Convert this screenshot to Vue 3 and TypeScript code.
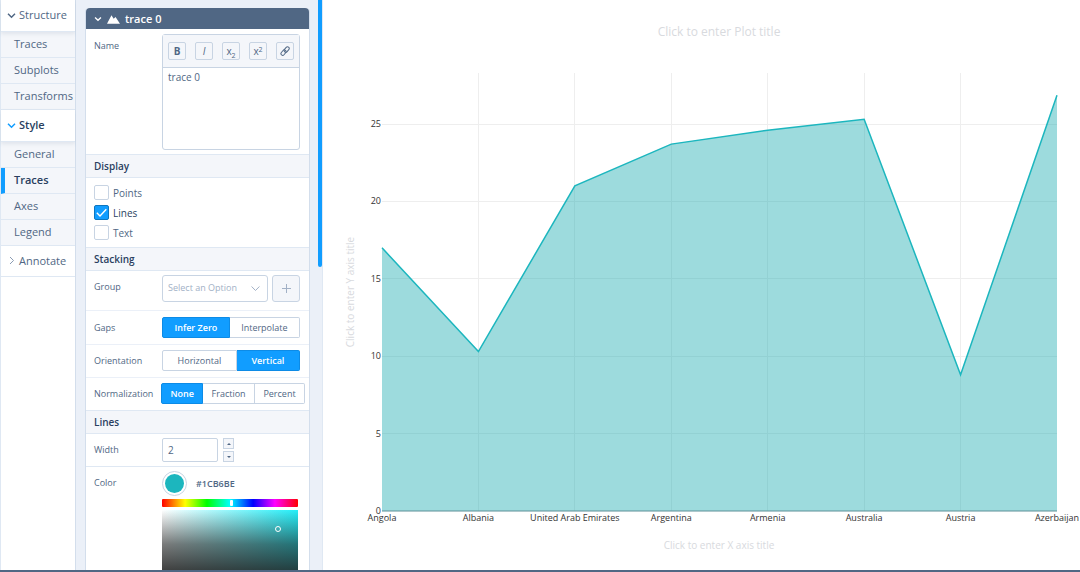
<script setup lang="ts">
import { ref } from 'vue'

interface NavGroup {
  title: string
  open: boolean
  items: string[]
}

const nav: NavGroup[] = [
  { title: 'Structure', open: true, items: ['Traces', 'Subplots', 'Transforms'] },
  { title: 'Style', open: true, items: ['General', 'Traces', 'Axes', 'Legend'] },
  { title: 'Annotate', open: false, items: [] },
]
const current = ref('Style/Traces')

const name = ref('trace 0')
const modes = ref<string[]>(['Lines'])
const group = ref('')
const lineWidth = ref('2')

const switches = ref([
  { label: 'Gaps', options: ['Infer Zero', 'Interpolate'], value: 'Infer Zero' },
  { label: 'Orientation', options: ['Horizontal', 'Vertical'], value: 'Vertical' },
  { label: 'Normalization', options: ['None', 'Fraction', 'Percent'], value: 'None' },
])

const data = [
  { country: 'Angola', value: 17 },
  { country: 'Albania', value: 10.3 },
  { country: 'United Arab Emirates', value: 21 },
  { country: 'Argentina', value: 23.7 },
  { country: 'Armenia', value: 24.6 },
  { country: 'Australia', value: 25.3 },
  { country: 'Austria', value: 8.8 },
  { country: 'Azerbaijan', value: 26.85 },
]
const plot = { left: 59, right: 734, top: 73, bottom: 511 }
const px = (i: number) => plot.left + (i * (plot.right - plot.left)) / (data.length - 1)
const py = (v: number) => plot.bottom - v * 15.48
const line = data.map((d, i) => `${px(i)},${py(d.value)}`).join(' ')
const area = `${plot.left},${plot.bottom} ${line} ${plot.right},${plot.bottom}`
const ticks = [0, 5, 10, 15, 20, 25]
</script>

<template>
  <div class="editor">
    <nav class="sidebar" aria-label="Editor sections">
      <section v-for="g in nav" :key="g.title" class="group">
        <button type="button" class="group-title" :class="{ active: g.title === 'Style' }" :aria-expanded="g.open">
          <svg v-if="g.open" width="9" height="9" viewBox="0 0 9 9"><path d="M1 2.7 4.5 6.2 8 2.7" /></svg>
          <svg v-else class="closed" width="9" height="9" viewBox="0 0 9 9"><path d="M3 1 6.5 4.5 3 8" /></svg>
          {{ g.title }}
        </button>
        <button
          v-for="item in g.items"
          :key="item"
          type="button"
          class="item"
          :class="{ selected: current === g.title + '/' + item }"
          @click="current = g.title + '/' + item"
        >{{ item }}</button>
      </section>
    </nav>

    <main class="panel">
      <div class="card">
        <button type="button" class="card-head" aria-expanded="true">
          <svg width="8" height="8" viewBox="0 0 9 9"><path class="chev" d="M1.2 2.8 4.5 6 7.8 2.8" /></svg>
          <svg width="13" height="10" viewBox="0 0 14 10"><path class="hill" d="M0 10 4.8 1 7.2 4.8 9.2 2.8 14 10Z" /></svg>
          <span>trace 0</span>
        </button>

        <div class="row name-row">
          <label for="name">Name</label>
          <div class="rich">
            <div class="tools">
              <button type="button" aria-label="Bold"><b>B</b></button>
              <button type="button" aria-label="Italic"><i>I</i></button>
              <button type="button" aria-label="Subscript"><span>x<small class="sub">2</small></span></button>
              <button type="button" aria-label="Superscript"><span>x<small class="sup">2</small></span></button>
              <button type="button" aria-label="Link">
                <svg width="10" height="10" viewBox="0 0 10 10">
                  <g transform="rotate(-50 5 5)">
                    <rect x="-0.2" y="3.2" width="6" height="3.4" rx="1.7" />
                    <rect x="4.2" y="3.6" width="6" height="3.4" rx="1.7" />
                  </g>
                </svg>
              </button>
            </div>
            <textarea id="name" v-model="name" spellcheck="false"></textarea>
          </div>
        </div>

        <h3>Display</h3>
        <div class="checks">
          <label v-for="m in ['Points', 'Lines', 'Text']" :key="m" :class="{ on: modes.includes(m) }">
            <span class="box">
              <input v-model="modes" type="checkbox" :value="m" />
              <svg v-if="modes.includes(m)" width="15" height="15" viewBox="0 0 15 15"><path d="M2.8 7.8 6 11 12.3 4.2" /></svg>
            </span>
            {{ m }}
          </label>
        </div>

        <h3>Stacking</h3>
        <div class="row group-row">
          <label for="group">Group</label>
          <div class="picker">
            <div class="select">
              <select id="group" v-model="group"><option value="">Select an Option</option></select>
              <svg width="9" height="9" viewBox="0 0 9 9"><path d="M0.6 2.5 4.5 6.5 8.4 2.5" /></svg>
            </div>
            <button type="button" class="add" aria-label="Add group">
              <svg width="9" height="9" viewBox="0 0 9 9"><path d="M4.5 0V9M0 4.5H9" /></svg>
            </button>
          </div>
        </div>

        <div v-for="s in switches" :key="s.label" class="row switch-row">
          <span :id="s.label">{{ s.label }}</span>
          <div class="segments" :class="{ three: s.options.length === 3 }" role="radiogroup" :aria-labelledby="s.label">
            <label v-for="o in s.options" :key="o" :class="{ on: s.value === o }">
              <input v-model="s.value" type="radio" :name="s.label" :value="o" />{{ o }}
            </label>
          </div>
        </div>

        <h3>Lines</h3>
        <div class="row width-row">
          <label for="width">Width</label>
          <div class="stepper">
            <input id="width" v-model="lineWidth" type="text" inputmode="numeric" />
            <div class="arrows">
              <button type="button" aria-label="Increase"><svg width="4" height="2" viewBox="0 0 4 2"><path d="M0 2 2 0 4 2Z" /></svg></button>
              <button type="button" aria-label="Decrease"><svg width="4" height="2" viewBox="0 0 4 2"><path d="M0 0 2 2 4 0Z" /></svg></button>
            </div>
          </div>
        </div>
        <div class="row color-row">
          <label for="hue">Color</label>
          <div class="color">
            <div class="swatch-line">
              <button type="button" class="swatch" aria-label="Line color"></button>
              <span>#1CB6BE</span>
            </div>
            <input id="hue" class="hue" type="range" min="0" max="360" value="183" />
            <div class="shade"><span class="dot"></span></div>
          </div>
        </div>
      </div>
      <div class="thumb"></div>
    </main>

    <section class="chart">
      <svg viewBox="0 0 757 570" role="img" aria-label="Area chart by country">
        <g class="grid">
          <line v-for="t in ticks.slice(1)" :key="t" :x1="plot.left" :x2="plot.right" :y1="py(t)" :y2="py(t)" />
          <line v-for="(d, i) in data.slice(1, -1)" :key="d.country" :x1="px(i + 1)" :x2="px(i + 1)" :y1="plot.top" :y2="plot.bottom" />
        </g>
        <polygon class="area" :points="area" />
        <line class="axis" :x1="plot.left" :x2="plot.right" :y1="plot.bottom" :y2="plot.bottom" />
        <polyline class="trace" :points="line" />
        <g class="tick">
          <text v-for="t in ticks" :key="t" x="58" :y="py(t) + 3" text-anchor="end">{{ t }}</text>
          <text v-for="(d, i) in data" :key="d.country" :x="px(i)" y="521" text-anchor="middle">{{ d.country }}</text>
        </g>
        <g class="hint">
          <text class="title" x="396" y="36" text-anchor="middle">Click to enter Plot title</text>
          <text x="396" y="549" text-anchor="middle">Click to enter X axis title</text>
          <text transform="translate(31 292) rotate(-90)" text-anchor="middle">Click to enter Y axis title</text>
        </g>
      </svg>
    </section>
  </div>
</template>

<style>
body {
  background: #fff;
}
</style>

<style scoped>
* {
  box-sizing: border-box;
}
.editor {
  display: grid;
  grid-template-columns: 76px 247px minmax(0, 1fr);
  height: 100vh;
  overflow: hidden;
  border-bottom: 2px solid #506784;
  font: 10px/14px 'Open Sans', sans-serif;
  color: #506784;
}
button,
input,
select,
textarea {
  margin: 0;
  padding: 0;
  font: inherit;
  color: inherit;
  background: none;
  border: 0;
  border-radius: 0;
  outline: none;
  appearance: none;
}
svg {
  display: block;
  flex: none;
  fill: none;
  stroke: currentColor;
}
.sidebar {
  border-left: 1px solid #dfe8f3;
  border-right: 1px solid #d3deec;
  font-size: 11px;
}
.group-title,
.item {
  display: flex;
  align-items: center;
  width: 100%;
  border-bottom: 1px solid #dfe8f3;
  white-space: nowrap;
}
.group-title {
  height: 32px;
  padding: 0 0 1px 6px;
  gap: 3px;
  position: relative;
  box-shadow: 0 2px 4px rgba(80, 103, 132, 0.12);
}
.group:last-child .group-title {
  height: 31px;
  box-shadow: none;
}
.group-title svg {
  stroke-width: 1.5;
}
.group-title .closed {
  stroke: #8a9bb3;
  stroke-width: 1;
}
.group-title.active {
  font-weight: 600;
  color: #2a3f5f;
}
.group-title.active svg {
  stroke: #119dff;
}
.item {
  height: 26px;
  padding: 0 0 1px 13px;
  background: #f4f6fa;
}
.item.selected {
  border-left: 4px solid #119dff;
  padding-left: 9px;
  font-weight: 600;
  color: #2a3f5f;
}
.panel {
  position: relative;
  padding: 8px 12px 0 9px;
  background: #ebf0f8;
  border-right: 1px solid #dfe8f3;
  overflow: hidden;
}
.thumb {
  position: absolute;
  top: 0;
  right: 0;
  width: 4px;
  height: 267px;
  background: #119dff;
  border-radius: 0 0 2px 2px;
}
.card {
  min-height: 100%;
  background: #fff;
  border: 1px solid #d3deec;
  border-top: 0;
  border-radius: 4px 4px 0 0;
}
.card-head {
  display: flex;
  align-items: center;
  gap: 5px;
  width: 100%;
  height: 21px;
  padding-left: 8px;
  background: #506784;
  border-radius: 4px 4px 0 0;
  color: #fff;
  font-size: 11px;
  font-weight: 600;
}
.chev {
  stroke-width: 1.5;
}
.hill {
  fill: #fff;
  stroke: none;
}
h3 {
  margin: 0;
  height: 24px;
  padding-left: 8px;
  font-size: 10px;
  line-height: 22px;
  font-weight: 600;
  color: #2a3f5f;
  background: #f4f6fa;
  border-top: 1px solid #dfe8f3;
  border-bottom: 1px solid #dfe8f3;
}
.row {
  display: grid;
  grid-template-columns: 68px minmax(0, 1fr);
  padding: 0 9px 0 8px;
  font-size: 9px;
}
.row > label {
  padding-top: 5px;
}
.name-row {
  height: 125px;
  padding-top: 5px;
}
.rich {
  height: 116px;
  display: flex;
  flex-direction: column;
  border: 1px solid #c8d4e3;
  border-radius: 3px;
  font-size: 10px;
}
.tools {
  display: flex;
  justify-content: space-between;
  align-items: center;
  height: 33px;
  padding: 0 5px;
  background: #f4f6fa;
  border-bottom: 1px solid #c8d4e3;
}
.tools button {
  display: flex;
  align-items: center;
  justify-content: center;
  width: 18px;
  height: 18px;
  border: 1px solid #c8d4e3;
  border-radius: 2px;
  line-height: 16px;
}
.tools small {
  position: relative;
  font-size: 7px;
  line-height: 7px;
}
.tools .sub {
  top: 3px;
}
.tools .sup {
  top: -3px;
}
textarea {
  flex: 1;
  width: 100%;
  padding: 2px 5px;
  resize: none;
}
.checks {
  display: grid;
  gap: 5px;
  height: 69px;
  padding: 7px 8px 0;
  align-content: start;
}
.checks label {
  display: flex;
  align-items: center;
  gap: 4px;
  height: 15px;
}
.checks .on {
  color: #2a3f5f;
}
.box {
  position: relative;
  width: 15px;
  height: 15px;
}
.box input {
  display: block;
  width: 15px;
  height: 15px;
  border: 1px solid #c8d4e3;
  border-radius: 2px;
}
.box input:checked {
  background: #119dff;
  border-color: #0d76bf;
}
.box svg {
  position: absolute;
  inset: 0;
  stroke: #fff;
  stroke-width: 1.4;
  pointer-events: none;
}
.group-row {
  height: 40px;
  padding-top: 4px;
  border-bottom: 1px solid #ebf0f8;
}
.picker {
  display: flex;
  gap: 4px;
  height: 27px;
}
.select {
  position: relative;
  flex: 1;
  color: #a2b1c6;
}
.select select {
  display: block;
  width: 100%;
  height: 27px;
  padding: 0 20px 2px 5px;
  border: 1px solid #c8d4e3;
  border-radius: 3px;
}
.select svg {
  position: absolute;
  right: 8px;
  top: 9px;
}
.add {
  display: grid;
  place-items: center;
  width: 28px;
  background: #f4f6fa;
  border: 1px solid #c8d4e3;
  border-radius: 3px;
  color: #a2b1c6;
}
.switch-row {
  height: 34px;
  margin-bottom: -1px;
  align-items: center;
  border-bottom: 1px solid #ebf0f8;
}
.segments {
  display: flex;
  height: 21px;
}
.segments.three {
  margin: 0 -5px 0 -1px;
}
.segments label {
  position: relative;
  flex: 1 1 auto;
  display: flex;
  align-items: center;
  justify-content: center;
  border: 1px solid #c8d4e3;
  white-space: nowrap;
}
.segments label + label {
  border-left: 0;
}
.segments label:first-child {
  border-radius: 2px 0 0 2px;
}
.segments label:last-child {
  border-radius: 0 2px 2px 0;
}
.segments .on {
  background: #119dff;
  border-color: #0d8be6;
  color: #fff;
  font-weight: 600;
}
.segments input {
  position: absolute;
  inset: 0;
}
.width-row {
  height: 33px;
  padding-top: 4px;
  border-bottom: 1px solid #dfe8f3;
}
.stepper {
  display: flex;
  gap: 5px;
}
.stepper input {
  width: 56px;
  height: 24px;
  padding-left: 5px;
  border: 1px solid #c8d4e3;
  border-radius: 2px;
  font-size: 10px;
}
.arrows {
  display: grid;
  gap: 2px;
  align-content: start;
}
.arrows button {
  display: grid;
  place-items: center;
  width: 11px;
  height: 11px;
  background: #f4f6fa;
  border: 1px solid #c8d4e3;
}
.arrows path {
  fill: #506784;
  stroke: none;
}
.color-row {
  padding-top: 4px;
}
.swatch-line {
  display: flex;
  align-items: center;
  gap: 9px;
  font-weight: 600;
}
.swatch {
  width: 25px;
  height: 25px;
  padding: 2px;
  border: 1px solid #c8d4e3;
  border-radius: 50%;
  background: #1cb6be content-box;
}
.color {
  padding-right: 2px;
}
.hue {
  display: block;
  width: 100%;
  height: 8px;
  margin: 3px 0;
  border-radius: 1px;
  background: linear-gradient(90deg, #f00, #ff0 17%, #0f0 33%, #0ff 50%, #00f 67%, #f0f 83%, #f00);
}
.hue::-webkit-slider-thumb {
  appearance: none;
  width: 3px;
  height: 6px;
  background: #fff;
  border-radius: 1px;
}
.shade {
  position: relative;
  height: 76px;
  background: linear-gradient(0deg, #222, #222d 20%, #2229 55%, transparent), linear-gradient(90deg, #fff, #24eef8);
}
.dot {
  position: absolute;
  left: 83%;
  top: 16px;
  width: 6px;
  height: 6px;
  border: 1px solid #fff;
  border-radius: 50%;
}
.chart svg {
  width: 100%;
  height: auto;
  overflow: visible;
}
.grid {
  stroke: #eee;
  shape-rendering: crispEdges;
}
.area {
  fill: #1cabb0;
  fill-opacity: 0.43;
  stroke: none;
}
.axis {
  stroke: #5c8f97;
}
.trace {
  stroke: #1cb6be;
  stroke-width: 1.5;
}
text {
  stroke: none;
}
.tick {
  font-size: 9px;
  fill: #333;
}
.hint {
  font-size: 10px;
  fill: #d8dade;
}
.hint .title {
  font-size: 12px;
}
</style>
